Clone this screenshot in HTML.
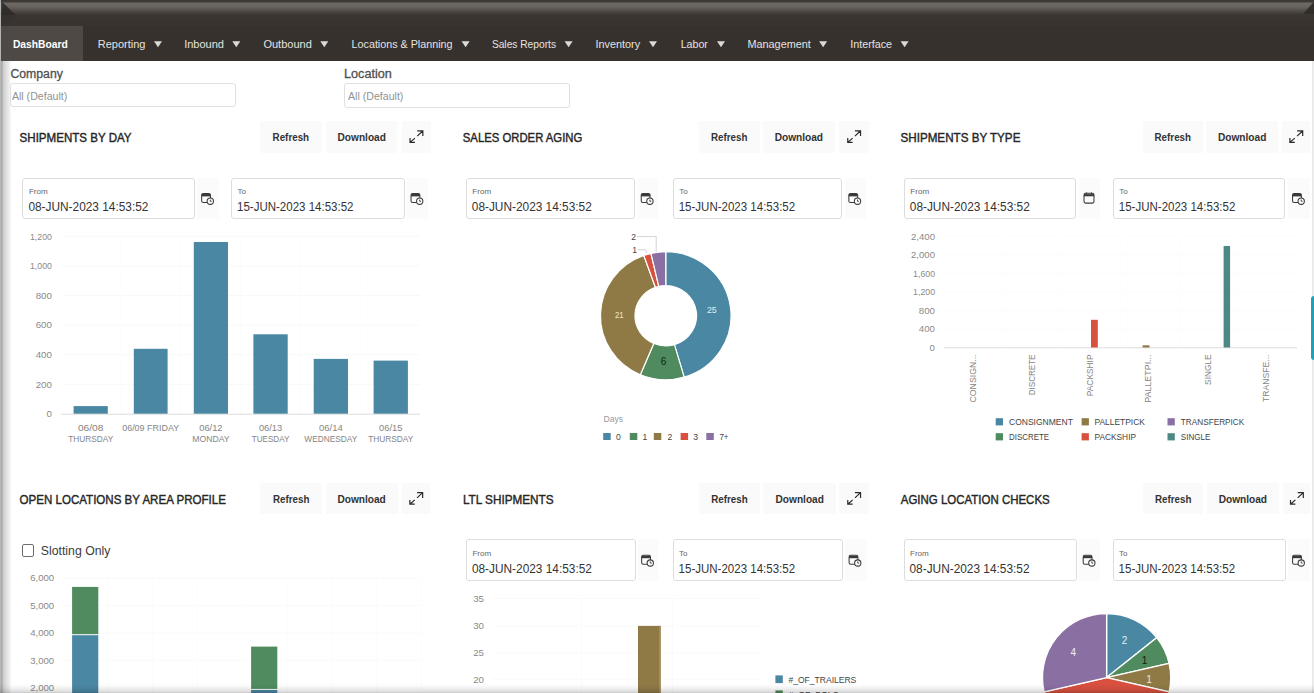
<!DOCTYPE html>
<html><head><meta charset="utf-8"><title>Dashboard</title>
<style>
html,body{margin:0;padding:0;background:#fff;}
body{width:1314px;height:693px;overflow:hidden;position:relative;font-family:"Liberation Sans", sans-serif;}
svg{position:absolute;left:0;top:0;}
svg text{font-family:"Liberation Sans", sans-serif;}
</style></head><body>
<div style="position:absolute;left:0px;top:0px;width:1314px;height:26px;background:linear-gradient(#3a3632 0px,#3e3a36 1.5px,#6d6864 3.5px,#67625e 7px,#4a4541 12px,#3a3531 15px,#38332f 26px)"></div>
<div style="position:absolute;left:0px;top:25.5px;width:1314px;height:35.8px;background:#36312d"></div>
<div style="position:absolute;left:1.3px;top:25.5px;width:81.7px;height:35.8px;background:#4e4945"></div>
<div style="position:absolute;left:0px;top:0px;width:1.3px;height:61.3px;background:#b4b4b4"></div>
<div style="position:absolute;left:0px;top:61.3px;width:11px;height:631.7px;background:linear-gradient(90deg,#bababa 0px,#a8a8a8 2.2px,#cdcdcd 3.2px,#dedede 6px,#ececec 9px,#ffffff 11.5px)"></div>
<div style="position:absolute;left:1311.5px;top:61.3px;width:2.5px;height:631.7px;background:linear-gradient(90deg,#e2e2e2,#efefef 1px,#f0f0f0)"></div>
<div style="position:absolute;left:1311px;top:295.5px;width:3px;height:64.9px;background:#1fa0b6;border-radius:3px 0 0 3px"></div>
<div style="position:absolute;left:10px;top:83.3px;width:226.3px;height:24.2px;box-sizing:border-box;border:1px solid #e0e0e0;border-radius:3px;background:#fff"></div>
<div style="position:absolute;left:344px;top:83.4px;width:226px;height:24.4px;box-sizing:border-box;border:1px solid #e0e0e0;border-radius:3px;background:#fff"></div>
<div style="position:absolute;left:260.1px;top:120.8px;width:61.5px;height:31.9px;background:#fafafa;border-radius:2px"></div>
<div style="position:absolute;left:325.9px;top:120.8px;width:71.6px;height:31.9px;background:#fafafa;border-radius:2px"></div>
<div style="position:absolute;left:401.8px;top:120.8px;width:28.9px;height:31.9px;background:#fafafa;border-radius:2px"></div>
<div style="position:absolute;left:22.4px;top:177.6px;width:172.2px;height:41.7px;box-sizing:border-box;border:1px solid #dddddd;border-radius:3px;background:#fff"></div>
<div style="position:absolute;left:196.6px;top:177.6px;width:22.9px;height:41.7px;background:#fbfbfb"></div>
<div style="position:absolute;left:231px;top:177.6px;width:173.6px;height:41.7px;box-sizing:border-box;border:1px solid #dddddd;border-radius:3px;background:#fff"></div>
<div style="position:absolute;left:406.9px;top:177.6px;width:21.1px;height:41.7px;background:#fbfbfb"></div>
<div style="position:absolute;left:698.5px;top:120.8px;width:61.3px;height:31.9px;background:#fafafa;border-radius:2px"></div>
<div style="position:absolute;left:762.5px;top:120.8px;width:72.7px;height:31.9px;background:#fafafa;border-radius:2px"></div>
<div style="position:absolute;left:839.2px;top:120.8px;width:29.5px;height:31.9px;background:#fafafa;border-radius:2px"></div>
<div style="position:absolute;left:465.8px;top:177.6px;width:169.4px;height:41.7px;box-sizing:border-box;border:1px solid #dddddd;border-radius:3px;background:#fff"></div>
<div style="position:absolute;left:637.6px;top:177.6px;width:20.1px;height:41.7px;background:#fbfbfb"></div>
<div style="position:absolute;left:672.7px;top:177.6px;width:169.8px;height:41.7px;box-sizing:border-box;border:1px solid #dddddd;border-radius:3px;background:#fff"></div>
<div style="position:absolute;left:844.5px;top:177.6px;width:21.5px;height:41.7px;background:#fbfbfb"></div>
<div style="position:absolute;left:1142.6px;top:120.8px;width:60.4px;height:31.9px;background:#fafafa;border-radius:2px"></div>
<div style="position:absolute;left:1206.3px;top:120.8px;width:71.7px;height:31.9px;background:#fafafa;border-radius:2px"></div>
<div style="position:absolute;left:1282.2px;top:120.8px;width:27.8px;height:31.9px;background:#fafafa;border-radius:2px"></div>
<div style="position:absolute;left:903.8px;top:177.6px;width:172.7px;height:41.7px;box-sizing:border-box;border:1px solid #dddddd;border-radius:3px;background:#fff"></div>
<div style="position:absolute;left:1078.8px;top:177.6px;width:20.8px;height:41.7px;background:#fbfbfb"></div>
<div style="position:absolute;left:1112.8px;top:177.6px;width:172.7px;height:41.7px;box-sizing:border-box;border:1px solid #dddddd;border-radius:3px;background:#fff"></div>
<div style="position:absolute;left:1287.9px;top:177.6px;width:22.1px;height:41.7px;background:#fbfbfb"></div>
<div style="position:absolute;left:260.3px;top:482.6px;width:61.7px;height:31.9px;background:#fafafa;border-radius:2px"></div>
<div style="position:absolute;left:325.6px;top:482.6px;width:72.0px;height:31.9px;background:#fafafa;border-radius:2px"></div>
<div style="position:absolute;left:401.7px;top:482.6px;width:28.7px;height:31.9px;background:#fafafa;border-radius:2px"></div>
<div style="position:absolute;left:698.8px;top:482.6px;width:61.2px;height:31.9px;background:#fafafa;border-radius:2px"></div>
<div style="position:absolute;left:763.4px;top:482.6px;width:72.6px;height:31.9px;background:#fafafa;border-radius:2px"></div>
<div style="position:absolute;left:839.3px;top:482.6px;width:29.3px;height:31.9px;background:#fafafa;border-radius:2px"></div>
<div style="position:absolute;left:465.9px;top:539.4px;width:169.7px;height:41.7px;box-sizing:border-box;border:1px solid #dddddd;border-radius:3px;background:#fff"></div>
<div style="position:absolute;left:637.6px;top:539.4px;width:20.9px;height:41.7px;background:#fbfbfb"></div>
<div style="position:absolute;left:672.6px;top:539.4px;width:170.1px;height:41.7px;box-sizing:border-box;border:1px solid #dddddd;border-radius:3px;background:#fff"></div>
<div style="position:absolute;left:844.5px;top:539.4px;width:22.0px;height:41.7px;background:#fbfbfb"></div>
<div style="position:absolute;left:1142.9px;top:482.6px;width:60.5px;height:31.9px;background:#fafafa;border-radius:2px"></div>
<div style="position:absolute;left:1206.7px;top:482.6px;width:72.3px;height:31.9px;background:#fafafa;border-radius:2px"></div>
<div style="position:absolute;left:1283.4px;top:482.6px;width:26.6px;height:31.9px;background:#fafafa;border-radius:2px"></div>
<div style="position:absolute;left:903.5px;top:539.4px;width:173.1px;height:41.7px;box-sizing:border-box;border:1px solid #dddddd;border-radius:3px;background:#fff"></div>
<div style="position:absolute;left:1079px;top:539.4px;width:21.2px;height:41.7px;background:#fbfbfb"></div>
<div style="position:absolute;left:1112.6px;top:539.4px;width:173.1px;height:41.7px;box-sizing:border-box;border:1px solid #dddddd;border-radius:3px;background:#fff"></div>
<div style="position:absolute;left:1288px;top:539.4px;width:22px;height:41.7px;background:#fbfbfb"></div>
<div style="position:absolute;left:22.3px;top:544.4px;width:12.1px;height:12.4px;box-sizing:border-box;border:1.2px solid #6e6e6e;border-radius:2px;background:#fff"></div>
<svg width="1314" height="693" viewBox="0 0 1314 693">
<polygon points="1.5,1.5 16,15 1.5,15" fill="#2e2a27" opacity="0.9"/>
<polygon points="1.5,15 16,15 1.5,26" fill="#37322e"/>
<polygon points="1314,1.5 1303,14 1314,14" fill="#2e2a27" opacity="0.9"/>
<text x="12.9" y="48.4" font-size="10.7" fill="#ffffff" font-weight="bold" textLength="54.9" lengthAdjust="spacingAndGlyphs">DashBoard</text>
<text x="97.8" y="48.4" font-size="10.7" fill="#e6e3e0" textLength="47.6" lengthAdjust="spacingAndGlyphs">Reporting</text>
<polygon points="154,41.3 162,41.3 158,47.3" fill="#dcdad8"/>
<text x="184.2" y="48.4" font-size="10.7" fill="#e6e3e0" textLength="39.8" lengthAdjust="spacingAndGlyphs">Inbound</text>
<polygon points="232.3,41.3 240.3,41.3 236.3,47.3" fill="#dcdad8"/>
<text x="263.4" y="48.4" font-size="10.7" fill="#e6e3e0" textLength="48.4" lengthAdjust="spacingAndGlyphs">Outbound</text>
<polygon points="320.3,41.3 328.3,41.3 324.3,47.3" fill="#dcdad8"/>
<text x="351.6" y="48.4" font-size="10.7" fill="#e6e3e0" textLength="100.9" lengthAdjust="spacingAndGlyphs">Locations &amp; Planning</text>
<polygon points="461.6,41.3 469.6,41.3 465.6,47.3" fill="#dcdad8"/>
<text x="491.9" y="48.4" font-size="10.7" fill="#e6e3e0" textLength="64.1" lengthAdjust="spacingAndGlyphs">Sales Reports</text>
<polygon points="564.6,41.3 572.6,41.3 568.6,47.3" fill="#dcdad8"/>
<text x="595.6" y="48.4" font-size="10.7" fill="#e6e3e0" textLength="44.5" lengthAdjust="spacingAndGlyphs">Inventory</text>
<polygon points="649,41.3 657,41.3 653,47.3" fill="#dcdad8"/>
<text x="680.7" y="48.4" font-size="10.7" fill="#e6e3e0" textLength="27.2" lengthAdjust="spacingAndGlyphs">Labor</text>
<polygon points="717,41.3 725,41.3 721,47.3" fill="#dcdad8"/>
<text x="747.5" y="48.4" font-size="10.7" fill="#e6e3e0" textLength="63.3" lengthAdjust="spacingAndGlyphs">Management</text>
<polygon points="819.1,41.3 827.1,41.3 823.1,47.3" fill="#dcdad8"/>
<text x="850.2" y="48.4" font-size="10.7" fill="#e6e3e0" textLength="41.9" lengthAdjust="spacingAndGlyphs">Interface</text>
<polygon points="900.6,41.3 908.6,41.3 904.6,47.3" fill="#dcdad8"/>
<text x="10.5" y="77.8" font-size="12" fill="#505050" textLength="52.3" lengthAdjust="spacingAndGlyphs" stroke="#505050" stroke-width="0.3">Company</text>
<text x="11.9" y="99.7" font-size="10.6" fill="#929292" textLength="55.4" lengthAdjust="spacingAndGlyphs">All (Default)</text>
<text x="344" y="77.7" font-size="12" fill="#505050" textLength="47.8" lengthAdjust="spacingAndGlyphs" stroke="#505050" stroke-width="0.3">Location</text>
<text x="348" y="99.7" font-size="10.6" fill="#929292" textLength="55.4" lengthAdjust="spacingAndGlyphs">All (Default)</text>
<text x="19.6" y="141.8" font-size="12.4" fill="#262626" textLength="112" lengthAdjust="spacingAndGlyphs" stroke="#262626" stroke-width="0.4">SHIPMENTS BY DAY</text>
<text x="290.85" y="141.1" font-size="10.8" fill="#333333" font-weight="bold" text-anchor="middle" textLength="36.5" lengthAdjust="spacingAndGlyphs">Refresh</text>
<text x="361.7" y="141.1" font-size="10.8" fill="#333333" font-weight="bold" text-anchor="middle" textLength="48.4" lengthAdjust="spacingAndGlyphs">Download</text>
<path d="M417.25 130.8 H422.84999999999997 V136.1 M422.84999999999997 130.8 L417.25 136.1 M410.05 138.1 V142.4 H414.95 M410.05 142.4 L414.95 138.1" fill="none" stroke="#2b2b2b" stroke-width="1.2"/>
<text x="28.9" y="194.0" font-size="8" fill="#666666" textLength="18.8" lengthAdjust="spacingAndGlyphs">From</text>
<text x="28.4" y="210.9" font-size="12" fill="#333333" textLength="120" lengthAdjust="spacingAndGlyphs">08-JUN-2023 14:53:52</text>
<rect x="201.65" y="193.50" width="8.8" height="9" rx="1.6" fill="none" stroke="#3a3a3a" stroke-width="1.05"/>
<line x1="201.65" y1="195.20" x2="210.45" y2="195.20" stroke="#3a3a3a" stroke-width="2.4"/>
<circle cx="210.30" cy="201.20" r="3.15" fill="#fbfbfb" stroke="#3a3a3a" stroke-width="1.05"/>
<path d="M210.30 199.60 V201.30 H211.65" fill="none" stroke="#3a3a3a" stroke-width="0.9"/>
<text x="237.5" y="194.0" font-size="8" fill="#666666" textLength="8.5" lengthAdjust="spacingAndGlyphs">To</text>
<text x="237" y="210.9" font-size="12" fill="#333333" textLength="116.5" lengthAdjust="spacingAndGlyphs">15-JUN-2023 14:53:52</text>
<rect x="411.05" y="193.50" width="8.8" height="9" rx="1.6" fill="none" stroke="#3a3a3a" stroke-width="1.05"/>
<line x1="411.05" y1="195.20" x2="419.85" y2="195.20" stroke="#3a3a3a" stroke-width="2.4"/>
<circle cx="419.70" cy="201.20" r="3.15" fill="#fbfbfb" stroke="#3a3a3a" stroke-width="1.05"/>
<path d="M419.70 199.60 V201.30 H421.05" fill="none" stroke="#3a3a3a" stroke-width="0.9"/>
<text x="462.8" y="141.8" font-size="12.4" fill="#262626" textLength="119.5" lengthAdjust="spacingAndGlyphs" stroke="#262626" stroke-width="0.4">SALES ORDER AGING</text>
<text x="729.15" y="141.1" font-size="10.8" fill="#333333" font-weight="bold" text-anchor="middle" textLength="36.5" lengthAdjust="spacingAndGlyphs">Refresh</text>
<text x="798.85" y="141.1" font-size="10.8" fill="#333333" font-weight="bold" text-anchor="middle" textLength="48.4" lengthAdjust="spacingAndGlyphs">Download</text>
<path d="M854.95 130.8 H860.5500000000001 V136.1 M860.5500000000001 130.8 L854.95 136.1 M847.7500000000001 138.1 V142.4 H852.6500000000001 M847.7500000000001 142.4 L852.6500000000001 138.1" fill="none" stroke="#2b2b2b" stroke-width="1.2"/>
<text x="472.3" y="194.0" font-size="8" fill="#666666" textLength="18.8" lengthAdjust="spacingAndGlyphs">From</text>
<text x="471.8" y="210.9" font-size="12" fill="#333333" textLength="120" lengthAdjust="spacingAndGlyphs">08-JUN-2023 14:53:52</text>
<rect x="641.25" y="193.50" width="8.8" height="9" rx="1.6" fill="none" stroke="#3a3a3a" stroke-width="1.05"/>
<line x1="641.25" y1="195.20" x2="650.05" y2="195.20" stroke="#3a3a3a" stroke-width="2.4"/>
<circle cx="649.90" cy="201.20" r="3.15" fill="#fbfbfb" stroke="#3a3a3a" stroke-width="1.05"/>
<path d="M649.90 199.60 V201.30 H651.25" fill="none" stroke="#3a3a3a" stroke-width="0.9"/>
<text x="679.2" y="194.0" font-size="8" fill="#666666" textLength="8.5" lengthAdjust="spacingAndGlyphs">To</text>
<text x="678.7" y="210.9" font-size="12" fill="#333333" textLength="116.5" lengthAdjust="spacingAndGlyphs">15-JUN-2023 14:53:52</text>
<rect x="848.85" y="193.50" width="8.8" height="9" rx="1.6" fill="none" stroke="#3a3a3a" stroke-width="1.05"/>
<line x1="848.85" y1="195.20" x2="857.65" y2="195.20" stroke="#3a3a3a" stroke-width="2.4"/>
<circle cx="857.50" cy="201.20" r="3.15" fill="#fbfbfb" stroke="#3a3a3a" stroke-width="1.05"/>
<path d="M857.50 199.60 V201.30 H858.85" fill="none" stroke="#3a3a3a" stroke-width="0.9"/>
<text x="900.5" y="141.8" font-size="12.4" fill="#262626" textLength="119.9" lengthAdjust="spacingAndGlyphs" stroke="#262626" stroke-width="0.4">SHIPMENTS BY TYPE</text>
<text x="1172.8" y="141.1" font-size="10.8" fill="#333333" font-weight="bold" text-anchor="middle" textLength="36.5" lengthAdjust="spacingAndGlyphs">Refresh</text>
<text x="1242.15" y="141.1" font-size="10.8" fill="#333333" font-weight="bold" text-anchor="middle" textLength="48.4" lengthAdjust="spacingAndGlyphs">Download</text>
<path d="M1297.1 130.8 H1302.7 V136.1 M1302.7 130.8 L1297.1 136.1 M1289.8999999999999 138.1 V142.4 H1294.8 M1289.8999999999999 142.4 L1294.8 138.1" fill="none" stroke="#2b2b2b" stroke-width="1.2"/>
<text x="910.3" y="194.0" font-size="8" fill="#666666" textLength="18.8" lengthAdjust="spacingAndGlyphs">From</text>
<text x="909.8" y="210.9" font-size="12" fill="#333333" textLength="120" lengthAdjust="spacingAndGlyphs">08-JUN-2023 14:53:52</text>
<rect x="1084.00" y="193.30" width="10" height="9.8" rx="1.6" fill="none" stroke="#3a3a3a" stroke-width="1.05"/>
<line x1="1084.00" y1="195.20" x2="1094.00" y2="195.20" stroke="#3a3a3a" stroke-width="2.2"/>
<path d="M1086.50 192.40 V194.30 M1091.50 192.40 V194.30" stroke="#3a3a3a" stroke-width="1.1"/>
<text x="1119.3" y="194.0" font-size="8" fill="#666666" textLength="8.5" lengthAdjust="spacingAndGlyphs">To</text>
<text x="1118.8" y="210.9" font-size="12" fill="#333333" textLength="116.5" lengthAdjust="spacingAndGlyphs">15-JUN-2023 14:53:52</text>
<rect x="1292.55" y="193.50" width="8.8" height="9" rx="1.6" fill="none" stroke="#3a3a3a" stroke-width="1.05"/>
<line x1="1292.55" y1="195.20" x2="1301.35" y2="195.20" stroke="#3a3a3a" stroke-width="2.4"/>
<circle cx="1301.20" cy="201.20" r="3.15" fill="#fbfbfb" stroke="#3a3a3a" stroke-width="1.05"/>
<path d="M1301.20 199.60 V201.30 H1302.55" fill="none" stroke="#3a3a3a" stroke-width="0.9"/>
<text x="19.5" y="503.6" font-size="12.4" fill="#262626" textLength="206.4" lengthAdjust="spacingAndGlyphs" stroke="#262626" stroke-width="0.4">OPEN LOCATIONS BY AREA PROFILE</text>
<text x="291.15" y="502.9" font-size="10.8" fill="#333333" font-weight="bold" text-anchor="middle" textLength="36.5" lengthAdjust="spacingAndGlyphs">Refresh</text>
<text x="361.6" y="502.9" font-size="10.8" fill="#333333" font-weight="bold" text-anchor="middle" textLength="48.4" lengthAdjust="spacingAndGlyphs">Download</text>
<path d="M417.04999999999995 492.6 H422.6499999999999 V497.90000000000003 M422.6499999999999 492.6 L417.04999999999995 497.90000000000003 M409.84999999999997 499.90000000000003 V504.2 H414.74999999999994 M409.84999999999997 504.2 L414.74999999999994 499.90000000000003" fill="none" stroke="#2b2b2b" stroke-width="1.2"/>
<text x="462.9" y="503.6" font-size="12.4" fill="#262626" textLength="90.7" lengthAdjust="spacingAndGlyphs" stroke="#262626" stroke-width="0.4">LTL SHIPMENTS</text>
<text x="729.4" y="502.9" font-size="10.8" fill="#333333" font-weight="bold" text-anchor="middle" textLength="36.5" lengthAdjust="spacingAndGlyphs">Refresh</text>
<text x="799.7" y="502.9" font-size="10.8" fill="#333333" font-weight="bold" text-anchor="middle" textLength="48.4" lengthAdjust="spacingAndGlyphs">Download</text>
<path d="M854.95 492.6 H860.5500000000001 V497.90000000000003 M860.5500000000001 492.6 L854.95 497.90000000000003 M847.7500000000001 499.90000000000003 V504.2 H852.6500000000001 M847.7500000000001 504.2 L852.6500000000001 499.90000000000003" fill="none" stroke="#2b2b2b" stroke-width="1.2"/>
<text x="472.4" y="555.8" font-size="8" fill="#666666" textLength="18.8" lengthAdjust="spacingAndGlyphs">From</text>
<text x="471.9" y="572.7" font-size="12" fill="#333333" textLength="120" lengthAdjust="spacingAndGlyphs">08-JUN-2023 14:53:52</text>
<rect x="641.65" y="555.30" width="8.8" height="9" rx="1.6" fill="none" stroke="#3a3a3a" stroke-width="1.05"/>
<line x1="641.65" y1="557.00" x2="650.45" y2="557.00" stroke="#3a3a3a" stroke-width="2.4"/>
<circle cx="650.30" cy="563.00" r="3.15" fill="#fbfbfb" stroke="#3a3a3a" stroke-width="1.05"/>
<path d="M650.30 561.40 V563.10 H651.65" fill="none" stroke="#3a3a3a" stroke-width="0.9"/>
<text x="679.1" y="555.8" font-size="8" fill="#666666" textLength="8.5" lengthAdjust="spacingAndGlyphs">To</text>
<text x="678.6" y="572.7" font-size="12" fill="#333333" textLength="116.5" lengthAdjust="spacingAndGlyphs">15-JUN-2023 14:53:52</text>
<rect x="849.10" y="555.30" width="8.8" height="9" rx="1.6" fill="none" stroke="#3a3a3a" stroke-width="1.05"/>
<line x1="849.10" y1="557.00" x2="857.90" y2="557.00" stroke="#3a3a3a" stroke-width="2.4"/>
<circle cx="857.75" cy="563.00" r="3.15" fill="#fbfbfb" stroke="#3a3a3a" stroke-width="1.05"/>
<path d="M857.75 561.40 V563.10 H859.10" fill="none" stroke="#3a3a3a" stroke-width="0.9"/>
<text x="900.8" y="503.6" font-size="12.4" fill="#262626" textLength="148.9" lengthAdjust="spacingAndGlyphs" stroke="#262626" stroke-width="0.4">AGING LOCATION CHECKS</text>
<text x="1173.15" y="502.9" font-size="10.8" fill="#333333" font-weight="bold" text-anchor="middle" textLength="36.5" lengthAdjust="spacingAndGlyphs">Refresh</text>
<text x="1242.85" y="502.9" font-size="10.8" fill="#333333" font-weight="bold" text-anchor="middle" textLength="48.4" lengthAdjust="spacingAndGlyphs">Download</text>
<path d="M1297.7 492.6 H1303.3000000000002 V497.90000000000003 M1303.3000000000002 492.6 L1297.7 497.90000000000003 M1290.5 499.90000000000003 V504.2 H1295.4 M1290.5 504.2 L1295.4 499.90000000000003" fill="none" stroke="#2b2b2b" stroke-width="1.2"/>
<text x="910.0" y="555.8" font-size="8" fill="#666666" textLength="18.8" lengthAdjust="spacingAndGlyphs">From</text>
<text x="909.5" y="572.7" font-size="12" fill="#333333" textLength="120" lengthAdjust="spacingAndGlyphs">08-JUN-2023 14:53:52</text>
<rect x="1083.20" y="555.30" width="8.8" height="9" rx="1.6" fill="none" stroke="#3a3a3a" stroke-width="1.05"/>
<line x1="1083.20" y1="557.00" x2="1092.00" y2="557.00" stroke="#3a3a3a" stroke-width="2.4"/>
<circle cx="1091.85" cy="563.00" r="3.15" fill="#fbfbfb" stroke="#3a3a3a" stroke-width="1.05"/>
<path d="M1091.85 561.40 V563.10 H1093.20" fill="none" stroke="#3a3a3a" stroke-width="0.9"/>
<text x="1119.1" y="555.8" font-size="8" fill="#666666" textLength="8.5" lengthAdjust="spacingAndGlyphs">To</text>
<text x="1118.6" y="572.7" font-size="12" fill="#333333" textLength="116.5" lengthAdjust="spacingAndGlyphs">15-JUN-2023 14:53:52</text>
<rect x="1292.60" y="555.30" width="8.8" height="9" rx="1.6" fill="none" stroke="#3a3a3a" stroke-width="1.05"/>
<line x1="1292.60" y1="557.00" x2="1301.40" y2="557.00" stroke="#3a3a3a" stroke-width="2.4"/>
<circle cx="1301.25" cy="563.00" r="3.15" fill="#fbfbfb" stroke="#3a3a3a" stroke-width="1.05"/>
<path d="M1301.25 561.40 V563.10 H1302.60" fill="none" stroke="#3a3a3a" stroke-width="0.9"/>
<text x="51.9" y="239.5" font-size="9.3" fill="#8a8a8a" text-anchor="end" textLength="21.9" lengthAdjust="spacingAndGlyphs">1,200</text>
<line x1="64" y1="236.3" x2="420" y2="236.3" stroke="#f8f8f8" stroke-width="1"/>
<text x="51.9" y="269.09999999999997" font-size="9.3" fill="#8a8a8a" text-anchor="end" textLength="21.9" lengthAdjust="spacingAndGlyphs">1,000</text>
<line x1="64" y1="265.9" x2="420" y2="265.9" stroke="#f8f8f8" stroke-width="1"/>
<text x="51.9" y="298.7" font-size="9.3" fill="#8a8a8a" text-anchor="end" textLength="16.2" lengthAdjust="spacingAndGlyphs">800</text>
<line x1="64" y1="295.5" x2="420" y2="295.5" stroke="#f8f8f8" stroke-width="1"/>
<text x="51.9" y="328.3" font-size="9.3" fill="#8a8a8a" text-anchor="end" textLength="16.2" lengthAdjust="spacingAndGlyphs">600</text>
<line x1="64" y1="325.1" x2="420" y2="325.1" stroke="#f8f8f8" stroke-width="1"/>
<text x="51.9" y="357.9" font-size="9.3" fill="#8a8a8a" text-anchor="end" textLength="16.2" lengthAdjust="spacingAndGlyphs">400</text>
<line x1="64" y1="354.7" x2="420" y2="354.7" stroke="#f8f8f8" stroke-width="1"/>
<text x="51.9" y="387.5" font-size="9.3" fill="#8a8a8a" text-anchor="end" textLength="16.2" lengthAdjust="spacingAndGlyphs">200</text>
<line x1="64" y1="384.3" x2="420" y2="384.3" stroke="#f8f8f8" stroke-width="1"/>
<text x="51.9" y="417.09999999999997" font-size="9.3" fill="#8a8a8a" text-anchor="end" textLength="5.4" lengthAdjust="spacingAndGlyphs">0</text>
<line x1="120.83" y1="236" x2="120.83" y2="414" stroke="#fcfcfc" stroke-width="1"/>
<line x1="180.66" y1="236" x2="180.66" y2="414" stroke="#fcfcfc" stroke-width="1"/>
<line x1="240.49" y1="236" x2="240.49" y2="414" stroke="#fcfcfc" stroke-width="1"/>
<line x1="300.32" y1="236" x2="300.32" y2="414" stroke="#fcfcfc" stroke-width="1"/>
<line x1="360.15" y1="236" x2="360.15" y2="414" stroke="#fcfcfc" stroke-width="1"/>
<line x1="61" y1="414.2" x2="420" y2="414.2" stroke="#dcdcdc" stroke-width="1"/>
<rect x="73.6" y="406.1" width="34.2" height="7.6" fill="#4a87a3"/>
<rect x="133.8" y="348.8" width="33.8" height="64.9" fill="#4a87a3"/>
<rect x="193.8" y="242" width="34.2" height="171.7" fill="#4a87a3"/>
<rect x="253.4" y="334.3" width="34.3" height="79.4" fill="#4a87a3"/>
<rect x="313.7" y="358.9" width="34.3" height="54.8" fill="#4a87a3"/>
<rect x="373.6" y="360.6" width="34.3" height="53.1" fill="#4a87a3"/>
<text x="90.69999999999999" y="430.5" font-size="8.6" fill="#858585" text-anchor="middle" textLength="25.6" lengthAdjust="spacingAndGlyphs">06/08</text>
<text x="90.69999999999999" y="441.8" font-size="8.6" fill="#858585" text-anchor="middle" textLength="45" lengthAdjust="spacingAndGlyphs">THURSDAY</text>
<text x="150.7" y="430.5" font-size="8.6" fill="#858585" text-anchor="middle" textLength="57" lengthAdjust="spacingAndGlyphs">06/09 FRIDAY</text>
<text x="210.9" y="430.5" font-size="8.6" fill="#858585" text-anchor="middle" textLength="23.3" lengthAdjust="spacingAndGlyphs">06/12</text>
<text x="210.9" y="441.8" font-size="8.6" fill="#858585" text-anchor="middle" textLength="37.3" lengthAdjust="spacingAndGlyphs">MONDAY</text>
<text x="270.55" y="430.5" font-size="8.6" fill="#858585" text-anchor="middle" textLength="23.3" lengthAdjust="spacingAndGlyphs">06/13</text>
<text x="270.55" y="441.8" font-size="8.6" fill="#858585" text-anchor="middle" textLength="37.7" lengthAdjust="spacingAndGlyphs">TUESDAY</text>
<text x="330.85" y="430.5" font-size="8.6" fill="#858585" text-anchor="middle" textLength="23.7" lengthAdjust="spacingAndGlyphs">06/14</text>
<text x="330.85" y="441.8" font-size="8.6" fill="#858585" text-anchor="middle" textLength="53" lengthAdjust="spacingAndGlyphs">WEDNESDAY</text>
<text x="390.75" y="430.5" font-size="8.6" fill="#858585" text-anchor="middle" textLength="23.3" lengthAdjust="spacingAndGlyphs">06/15</text>
<text x="390.75" y="441.8" font-size="8.6" fill="#858585" text-anchor="middle" textLength="45.2" lengthAdjust="spacingAndGlyphs">THURSDAY</text>
<g transform="translate(0 6.3) scale(1 0.98)">
<path d="M665.75 250.45 A65.3 65.3 0 0 1 684.15 378.40 L674.43 345.30 A30.8 30.8 0 0 0 665.75 284.95 Z" fill="#4a87a3" stroke="#ffffff" stroke-width="1.2"/>
<path d="M684.15 378.40 A65.3 65.3 0 0 1 640.33 375.90 L653.76 344.12 A30.8 30.8 0 0 0 674.43 345.30 Z" fill="#4f8b5e" stroke="#ffffff" stroke-width="1.2"/>
<path d="M640.33 375.90 A65.3 65.3 0 0 1 643.81 254.25 L655.40 286.74 A30.8 30.8 0 0 0 653.76 344.12 Z" fill="#8f7a46" stroke="#ffffff" stroke-width="1.2"/>
<path d="M643.81 254.25 A65.3 65.3 0 0 1 650.96 252.15 L658.77 285.75 A30.8 30.8 0 0 0 655.40 286.74 Z" fill="#d9503f" stroke="#ffffff" stroke-width="1.2"/>
<path d="M650.96 252.15 A65.3 65.3 0 0 1 665.75 250.45 L665.75 284.95 A30.8 30.8 0 0 0 658.77 285.75 Z" fill="#8a6fa3" stroke="#ffffff" stroke-width="1.2"/>
</g>
<text x="711.8" y="313.4" font-size="9.6" fill="#e0eef4" text-anchor="middle" textLength="9.8" lengthAdjust="spacingAndGlyphs">25</text>
<text x="663.5" y="364.6" font-size="10" fill="#10240f" text-anchor="middle">6</text>
<text x="619.2" y="318.4" font-size="9.6" fill="#f0e6c8" text-anchor="middle" textLength="8.6" lengthAdjust="spacingAndGlyphs">21</text>
<path d="M637 236.6 H656.2 V252" fill="none" stroke="#c8c8c8" stroke-width="0.8"/>
<path d="M638 249.8 H645.6 L647 253" fill="none" stroke="#c8c8c8" stroke-width="0.8"/>
<text x="633.6" y="240" font-size="8.6" fill="#444" text-anchor="middle">2</text>
<text x="634.6" y="253" font-size="8.6" fill="#444" text-anchor="middle">1</text>
<text x="603.6" y="421.6" font-size="8.6" fill="#999999" textLength="19.4" lengthAdjust="spacingAndGlyphs">Days</text>
<rect x="603.2" y="433" width="7.5" height="7" fill="#4a87a3"/>
<text x="616.1" y="439.6" font-size="8.6" fill="#444444">0</text>
<rect x="629.8" y="433" width="7.5" height="7" fill="#4f8b5e"/>
<text x="642.4" y="439.6" font-size="8.6" fill="#444444">1</text>
<rect x="653.8" y="433" width="7.5" height="7" fill="#8f7a46"/>
<text x="667.5" y="439.6" font-size="8.6" fill="#444444">2</text>
<rect x="680.6" y="433" width="7.5" height="7" fill="#d9503f"/>
<text x="693.2" y="439.6" font-size="8.6" fill="#444444">3</text>
<rect x="706.3" y="433" width="7.5" height="7" fill="#8a6fa3"/>
<text x="719.4" y="439.6" font-size="8.6" fill="#444444" textLength="9.2" lengthAdjust="spacingAndGlyphs">7+</text>
<text x="935" y="239.5" font-size="9.3" fill="#8a8a8a" text-anchor="end" textLength="24.0" lengthAdjust="spacingAndGlyphs">2,400</text>
<line x1="943.7" y1="236.3" x2="1297" y2="236.3" stroke="#fcfcfc" stroke-width="1"/>
<text x="935" y="257.8" font-size="9.3" fill="#8a8a8a" text-anchor="end" textLength="24.0" lengthAdjust="spacingAndGlyphs">2,000</text>
<line x1="943.7" y1="254.6" x2="1297" y2="254.6" stroke="#fcfcfc" stroke-width="1"/>
<text x="935" y="276.59999999999997" font-size="9.3" fill="#8a8a8a" text-anchor="end" textLength="21.9" lengthAdjust="spacingAndGlyphs">1,600</text>
<line x1="943.7" y1="273.4" x2="1297" y2="273.4" stroke="#fcfcfc" stroke-width="1"/>
<text x="935" y="295.2" font-size="9.3" fill="#8a8a8a" text-anchor="end" textLength="21.9" lengthAdjust="spacingAndGlyphs">1,200</text>
<line x1="943.7" y1="292.0" x2="1297" y2="292.0" stroke="#fcfcfc" stroke-width="1"/>
<text x="935" y="313.8" font-size="9.3" fill="#8a8a8a" text-anchor="end" textLength="16.2" lengthAdjust="spacingAndGlyphs">800</text>
<line x1="943.7" y1="310.6" x2="1297" y2="310.6" stroke="#fcfcfc" stroke-width="1"/>
<text x="935" y="332.3" font-size="9.3" fill="#8a8a8a" text-anchor="end" textLength="16.2" lengthAdjust="spacingAndGlyphs">400</text>
<line x1="943.7" y1="329.1" x2="1297" y2="329.1" stroke="#fcfcfc" stroke-width="1"/>
<text x="935" y="350.8" font-size="9.3" fill="#8a8a8a" text-anchor="end" textLength="5.4" lengthAdjust="spacingAndGlyphs">0</text>
<line x1="1002.6" y1="236" x2="1002.6" y2="347" stroke="#fdfdfd" stroke-width="1"/>
<line x1="1061.5" y1="236" x2="1061.5" y2="347" stroke="#fdfdfd" stroke-width="1"/>
<line x1="1120.4" y1="236" x2="1120.4" y2="347" stroke="#fdfdfd" stroke-width="1"/>
<line x1="1179.3" y1="236" x2="1179.3" y2="347" stroke="#fdfdfd" stroke-width="1"/>
<line x1="1238.2" y1="236" x2="1238.2" y2="347" stroke="#fdfdfd" stroke-width="1"/>
<line x1="943.7" y1="347.8" x2="1297" y2="347.8" stroke="#dcdcdc" stroke-width="1"/>
<rect x="1091" y="319.8" width="6.8" height="27.7" fill="#d9503f"/>
<rect x="1142.6" y="345.3" width="6.9" height="2.2" fill="#8f7a46"/>
<rect x="1223.6" y="246" width="6.5" height="101.5" fill="#4e8884"/>
<text transform="translate(976.1 354.5) rotate(-90)" x="0" y="0" font-size="9.8" fill="#858585" text-anchor="end" textLength="48" lengthAdjust="spacingAndGlyphs">CONSIGN...</text>
<text transform="translate(1034.6 354.5) rotate(-90)" x="0" y="0" font-size="9.8" fill="#858585" text-anchor="end" textLength="40.8" lengthAdjust="spacingAndGlyphs">DISCRETE</text>
<text transform="translate(1092.5 354.5) rotate(-90)" x="0" y="0" font-size="9.8" fill="#858585" text-anchor="end" textLength="41.7" lengthAdjust="spacingAndGlyphs">PACKSHIP</text>
<text transform="translate(1151.3 354.5) rotate(-90)" x="0" y="0" font-size="9.8" fill="#858585" text-anchor="end" textLength="48.2" lengthAdjust="spacingAndGlyphs">PALLETPI...</text>
<text transform="translate(1210.6999999999998 354.5) rotate(-90)" x="0" y="0" font-size="9.8" fill="#858585" text-anchor="end" textLength="30.4" lengthAdjust="spacingAndGlyphs">SINGLE</text>
<text transform="translate(1269.3 354.5) rotate(-90)" x="0" y="0" font-size="9.8" fill="#858585" text-anchor="end" textLength="47.5" lengthAdjust="spacingAndGlyphs">TRANSFE...</text>
<rect x="995.7" y="418.2" width="7.3" height="7.2" fill="#4a87a3"/>
<text x="1009" y="425.2" font-size="9.3" fill="#444444" textLength="63.9" lengthAdjust="spacingAndGlyphs">CONSIGNMENT</text>
<rect x="1081.6" y="418.2" width="7.3" height="7.2" fill="#8f7a46"/>
<text x="1094.5" y="425.2" font-size="9.3" fill="#444444" textLength="50.4" lengthAdjust="spacingAndGlyphs">PALLETPICK</text>
<rect x="1167.5" y="418.2" width="7.3" height="7.2" fill="#8a6fa3"/>
<text x="1180.8" y="425.2" font-size="9.3" fill="#444444" textLength="63.5" lengthAdjust="spacingAndGlyphs">TRANSFERPICK</text>
<rect x="995.7" y="433.2" width="7.3" height="7.2" fill="#4f8b5e"/>
<text x="1009" y="440.2" font-size="9.3" fill="#444444" textLength="40.1" lengthAdjust="spacingAndGlyphs">DISCRETE</text>
<rect x="1081.6" y="433.2" width="7.3" height="7.2" fill="#d9503f"/>
<text x="1094.5" y="440.2" font-size="9.3" fill="#444444" textLength="41.5" lengthAdjust="spacingAndGlyphs">PACKSHIP</text>
<rect x="1167.5" y="433.2" width="7.3" height="7.2" fill="#4e8884"/>
<text x="1180.8" y="440.2" font-size="9.3" fill="#444444" textLength="29.6" lengthAdjust="spacingAndGlyphs">SINGLE</text>
<text x="40.8" y="555.0" font-size="12.3" fill="#3c3c3c" textLength="69.6" lengthAdjust="spacingAndGlyphs">Slotting Only</text>
<text x="54.2" y="581.2" font-size="9.3" fill="#8a8a8a" text-anchor="end" textLength="24.0" lengthAdjust="spacingAndGlyphs">6,000</text>
<line x1="63" y1="578" x2="421" y2="578" stroke="#fafafa" stroke-width="1"/>
<text x="54.2" y="608.7" font-size="9.3" fill="#8a8a8a" text-anchor="end" textLength="24.0" lengthAdjust="spacingAndGlyphs">5,000</text>
<line x1="63" y1="605.5" x2="421" y2="605.5" stroke="#fafafa" stroke-width="1"/>
<text x="54.2" y="636.2" font-size="9.3" fill="#8a8a8a" text-anchor="end" textLength="24.0" lengthAdjust="spacingAndGlyphs">4,000</text>
<line x1="63" y1="633" x2="421" y2="633" stroke="#fafafa" stroke-width="1"/>
<text x="54.2" y="663.7" font-size="9.3" fill="#8a8a8a" text-anchor="end" textLength="24.0" lengthAdjust="spacingAndGlyphs">3,000</text>
<line x1="63" y1="660.5" x2="421" y2="660.5" stroke="#fafafa" stroke-width="1"/>
<text x="54.2" y="691.2" font-size="9.3" fill="#8a8a8a" text-anchor="end" textLength="24.0" lengthAdjust="spacingAndGlyphs">2,000</text>
<line x1="63" y1="688" x2="421" y2="688" stroke="#fafafa" stroke-width="1"/>
<line x1="107.8" y1="578" x2="107.8" y2="693" stroke="#fcfcfc" stroke-width="1"/>
<line x1="152.6" y1="578" x2="152.6" y2="693" stroke="#fcfcfc" stroke-width="1"/>
<line x1="197.39999999999998" y1="578" x2="197.39999999999998" y2="693" stroke="#fcfcfc" stroke-width="1"/>
<line x1="242.2" y1="578" x2="242.2" y2="693" stroke="#fcfcfc" stroke-width="1"/>
<line x1="287.0" y1="578" x2="287.0" y2="693" stroke="#fcfcfc" stroke-width="1"/>
<line x1="331.79999999999995" y1="578" x2="331.79999999999995" y2="693" stroke="#fcfcfc" stroke-width="1"/>
<line x1="376.59999999999997" y1="578" x2="376.59999999999997" y2="693" stroke="#fcfcfc" stroke-width="1"/>
<line x1="421.4" y1="578" x2="421.4" y2="693" stroke="#fcfcfc" stroke-width="1"/>
<rect x="72.1" y="586.9" width="26.2" height="47.3" fill="#4f8b5e"/>
<rect x="72.1" y="635.2" width="26.2" height="64.8" fill="#4a87a3"/>
<rect x="251.1" y="646.6" width="26.2" height="42.3" fill="#4f8b5e"/>
<rect x="251.1" y="689.9" width="26.2" height="10.1" fill="#4a87a3"/>
<text x="484" y="601.6" font-size="9.3" fill="#8a8a8a" text-anchor="end" textLength="10.8" lengthAdjust="spacingAndGlyphs">35</text>
<line x1="492" y1="598.4" x2="760.4" y2="598.4" stroke="#fafafa" stroke-width="1"/>
<text x="484" y="629.1" font-size="9.3" fill="#8a8a8a" text-anchor="end" textLength="10.8" lengthAdjust="spacingAndGlyphs">30</text>
<line x1="492" y1="625.9" x2="760.4" y2="625.9" stroke="#fafafa" stroke-width="1"/>
<text x="484" y="656.0" font-size="9.3" fill="#8a8a8a" text-anchor="end" textLength="10.8" lengthAdjust="spacingAndGlyphs">25</text>
<line x1="492" y1="652.8" x2="760.4" y2="652.8" stroke="#fafafa" stroke-width="1"/>
<text x="484" y="682.5" font-size="9.3" fill="#8a8a8a" text-anchor="end" textLength="10.8" lengthAdjust="spacingAndGlyphs">20</text>
<line x1="492" y1="679.3" x2="760.4" y2="679.3" stroke="#fafafa" stroke-width="1"/>
<line x1="581.4" y1="598" x2="581.4" y2="693" stroke="#fbfbfb" stroke-width="1"/>
<line x1="672.5" y1="598" x2="672.5" y2="693" stroke="#fbfbfb" stroke-width="1"/>
<rect x="638" y="625.9" width="22.7" height="74.1" fill="#8f7a46"/>
<rect x="659.2" y="625.9" width="1.5" height="74.1" fill="#a89160"/>
<rect x="775.4" y="675.4" width="7.4" height="7.7" fill="#4a87a3"/>
<text x="788.5" y="682.6" font-size="9.3" fill="#444444" textLength="67.8" lengthAdjust="spacingAndGlyphs">#_OF_TRAILERS</text>
<rect x="775.4" y="690.4" width="7.4" height="7.6" fill="#4f8b5e"/>
<text x="788.5" y="697.6" font-size="9.3" fill="#444444" textLength="50" lengthAdjust="spacingAndGlyphs">#_OF_BOLS</text>
<path d="M1106.6 677.6 L1106.60 613.50 A64.1 64.1 0 0 1 1156.72 637.63 Z" fill="#4a87a3" stroke="#ffffff" stroke-width="1.3"/>
<path d="M1106.6 677.6 L1156.72 637.63 A64.1 64.1 0 0 1 1169.09 663.34 Z" fill="#4f8b5e" stroke="#ffffff" stroke-width="1.3"/>
<path d="M1106.6 677.6 L1169.09 663.34 A64.1 64.1 0 0 1 1169.09 691.86 Z" fill="#8f7a46" stroke="#ffffff" stroke-width="1.3"/>
<path d="M1106.6 677.6 L1169.09 691.86 A64.1 64.1 0 0 1 1044.11 691.86 Z" fill="#d9503f" stroke="#ffffff" stroke-width="1.3"/>
<path d="M1106.6 677.6 L1044.11 691.86 A64.1 64.1 0 0 1 1106.60 613.50 Z" fill="#8a6fa3" stroke="#ffffff" stroke-width="1.3"/>
<text x="1124.6" y="643.6" font-size="10" fill="#e0eef4" text-anchor="middle">2</text>
<text x="1144.5" y="664.0" font-size="10" fill="#10240f" text-anchor="middle">1</text>
<text x="1149" y="682.6" font-size="10" fill="#f0e6c8" text-anchor="middle">1</text>
<text x="1073.3" y="655.6" font-size="10" fill="#f2ecf6" text-anchor="middle">4</text>
</svg>
<div style="position:absolute;left:0;top:683px;width:1314px;height:10px;background:linear-gradient(rgba(0,0,0,0) 0px,rgba(0,0,0,0.02) 3px,rgba(0,0,0,0.07) 6px,rgba(0,0,0,0.13) 8.5px,rgba(0,0,0,0.22) 10px)"></div>
</body></html>
